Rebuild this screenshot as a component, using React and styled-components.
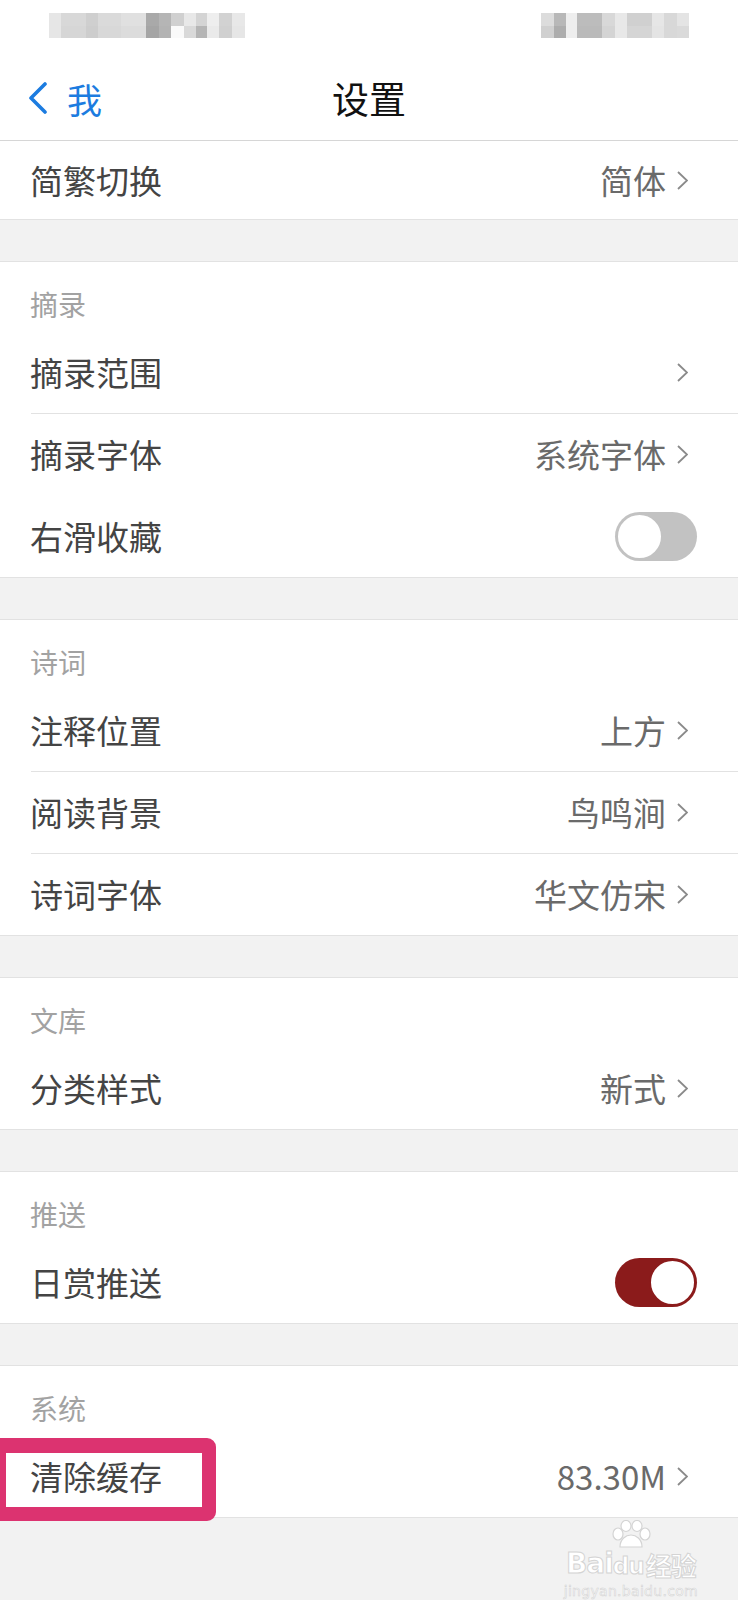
import styled, { createGlobalStyle } from "styled-components";

const GlobalStyle = createGlobalStyle`
  body {
    margin: 0;
    background: #f2f2f2;
    font-family: "Noto Sans CJK SC", "Noto Sans", sans-serif;
  }
`;

// blurred status bar blocks: [width, top shade, bottom shade]
const leftCells = [
  [12, '#e6e6e6', '#e6e6e6'], [25, '#d8d8d8', '#d6d6d6'], [12, '#cfcfcf', '#cdcdcd'],
  [23, '#dadada', '#d8d8d8'], [25, '#e0e0e0', '#dcdcdc'], [13, '#a9a9a9', '#a5a5a5'],
  [12, '#b5b5b5', '#b3b3b3'], [13, '#d0d0d0', '#fafafa'], [12, '#e8e8e8', '#d9d9d9'],
  [11, '#d4d4d4', '#b5b5b5'], [12, '#eeeeee', '#eaeaea'], [13, '#d2d2d2', '#d0d0d0'],
  [13, '#e8e8e8', '#e6e6e6']
];
const rightCells = [
  [13, '#dcdcdc', '#d0d0d0'], [12, '#b8b8b8', '#adadad'], [11, '#eeeeee', '#eeeeee'],
  [25, '#bcbcbc', '#bababa'], [13, '#d8d8d8', '#d4d4d4'], [12, '#e8e8e8', '#e8e8e8'],
  [25, '#d0d0d0', '#d5d5d5'], [12, '#e6e6e6', '#e4e4e4'], [13, '#d8d8d8', '#d8d8d8'],
  [12, '#e4e4e4', '#dadada']
];

const Page = styled.div`
  position: relative;
  min-height: 1600px;
  background: #f2f2f2;
  overflow: hidden;
`;

const Header = styled.header`
  background: #fff;
  border-bottom: 1px solid #d6d6d6;
`;

const StatusBar = styled.div`
  height: 56px;
  box-sizing: border-box;
  padding: 13px 49px 0 49px;
  display: flex;
  justify-content: space-between;
  align-items: flex-start;
`;

const Mosaic = styled.div`
  display: flex;
  filter: blur(0.6px);
`;

const MosaicCell = styled.div`
  width: ${p => p.$w}px;
  display: flex;
  flex-direction: column;
  & > span { display: block; height: 12.5px; }
`;

const NavBar = styled.nav`
  height: 84px;
  display: grid;
  grid-template-columns: 1fr auto 1fr;
  align-items: center;
`;

const BackLink = styled.div`
  display: flex;
  align-items: center;
  gap: 19px;
  padding-left: 28px;
  color: #1c7ce0;
  font-size: 35px;
  line-height: 1;
`;

const Title = styled.h1`
  margin: 0;
  font-size: 37px;
  font-weight: 400;
  color: #111;
  line-height: 1;
`;

const Section = styled.section`
  background: #fff;
  border-top: ${p => (p.$flush ? 'none' : '1px solid #e2e2e2')};
  border-bottom: 1px solid #e2e2e2;
  margin-top: ${p => (p.$flush ? 0 : 41)}px;
`;

const SectionLabel = styled.div`
  height: 69px;
  box-sizing: border-box;
  padding: 28px 0 0 30px;
  font-size: 28px;
  line-height: 28px;
  color: #a2a2a2;
`;

const Row = styled.div`
  position: relative;
  height: ${p => p.$h || 82}px;
  box-sizing: border-box;
  display: flex;
  align-items: center;
  padding: 0 ${p => (p.$toggle ? 41 : 50)}px 0 30px;
  & + &::before {
    content: '';
    position: absolute;
    top: 0;
    left: 31px;
    right: 0;
    height: 1px;
    background: #e2e2e2;
  }
`;

const Label = styled.span`
  flex: 1;
  font-size: 33px;
  color: #444;
  line-height: 1;
`;

const Value = styled.span`
  font-size: 33px;
  color: #6a6a6a;
  line-height: 1;
  margin-right: 11px;
`;

const Toggle = styled.div`
  position: relative;
  width: 82px;
  height: 49px;
  border-radius: 25px;
  background: ${p => (p.$on ? '#8b1b1b' : '#c2c2c2')};
  &::after {
    content: '';
    position: absolute;
    top: 1px;
    ${p => (p.$on ? 'right: 1px;' : 'left: 1px;')}
    width: 43px;
    height: 43px;
    border-radius: 50%;
    background: #fff;
    border: 2px solid ${p => (p.$on ? '#8b1b1b' : '#c2c2c2')};
    box-sizing: content-box;
  }
`;

const Highlight = styled.div`
  position: absolute;
  left: 0;
  top: 3px;
  width: 216px;
  height: 83px;
  box-sizing: border-box;
  border: solid #dc3370;
  border-width: 15px 14px 14px 6px;
  border-radius: 0 9px 9px 0;
  pointer-events: none;
`;

const Watermark = styled.div`
  position: absolute;
  right: 40px;
  top: 1520px;
  display: flex;
  flex-direction: column;
  align-items: center;
  color: #fff;
  font-family: "DejaVu Sans", sans-serif;
`;

const MarkTop = styled.div`
  display: flex;
  align-items: flex-end;
  font-weight: bold;
  font-size: 28px;
  line-height: 1;
  -webkit-text-stroke: 1px #d4d4d4;
  letter-spacing: -1px;
`;

const MarkCn = styled.span`
  font-family: "Noto Sans CJK SC", sans-serif;
  font-size: 26px;
  font-weight: 700;
  margin-left: 2px;
`;

const MarkUrl = styled.div`
  margin-top: 6px;
  font-size: 14px;
  line-height: 1;
  -webkit-text-stroke: 0.6px #d4d4d4;
  letter-spacing: 0.3px;
`;

const Chevron = () => (
  <svg width="11" height="19" viewBox="0 0 11 19">
    <polyline points="1,1 10,9.5 1,18" fill="none" stroke="#8a8a8a" strokeWidth="1.8" />
  </svg>
);

const BackIcon = () => (
  <svg width="20" height="32" viewBox="0 0 20 32">
    <polyline points="17,2 3,16 17,30" fill="none" stroke="#1c7ce0" strokeWidth="3.6" strokeLinecap="round" strokeLinejoin="round" />
  </svg>
);

const Paw = () => (
  <svg width="42" height="30" viewBox="0 0 42 30">
    <g fill="#fff" stroke="#d4d4d4" strokeWidth="1.2">
      <ellipse cx="8" cy="14" rx="5" ry="6" />
      <ellipse cx="16" cy="6" rx="5" ry="5.5" />
      <ellipse cx="27" cy="6" rx="5" ry="5.5" />
      <ellipse cx="35" cy="14" rx="5" ry="6" />
      <path d="M10 27 C10 19 16 15 21 15 C26 15 32 19 32 27 Z" />
    </g>
  </svg>
);

const Cells = ({ cells }) => (
  <Mosaic>
    {cells.map(([w, a, b], i) => (
      <MosaicCell key={i} $w={w}>
        <span style={{ background: a }} />
        <span style={{ background: b }} />
      </MosaicCell>
    ))}
  </Mosaic>
);

const sections = [
  {
    title: '摘录',
    rows: [
      { label: '摘录范围', value: '' },
      { label: '摘录字体', value: '系统字体' },
      { label: '右滑收藏', toggle: 'off' }
    ]
  },
  {
    title: '诗词',
    rows: [
      { label: '注释位置', value: '上方' },
      { label: '阅读背景', value: '鸟鸣涧' },
      { label: '诗词字体', value: '华文仿宋' }
    ]
  },
  { title: '文库', rows: [{ label: '分类样式', value: '新式' }] },
  { title: '推送', rows: [{ label: '日赏推送', toggle: 'on' }] },
  { title: '系统', rows: [{ label: '清除缓存', value: '83.30M', mark: true }] }
];

const SettingRow = ({ label, value, toggle, mark, h }) => (
  <Row $toggle={!!toggle} $h={h}>
    <Label>{label}</Label>
    {toggle ? (
      <Toggle $on={toggle === 'on'} />
    ) : (
      <>
        {value && <Value>{value}</Value>}
        <Chevron />
      </>
    )}
    {mark && <Highlight />}
  </Row>
);

const App = () => {
  return (
    <Page>
      <GlobalStyle />
      <Header>
        <StatusBar>
          <Cells cells={leftCells} />
          <Cells cells={rightCells} />
        </StatusBar>
        <NavBar>
          <BackLink>
            <BackIcon />
            <span>我</span>
          </BackLink>
          <Title>设置</Title>
          <div />
        </NavBar>
      </Header>

      <Section $flush>
        <SettingRow label="简繁切换" value="简体" h={78} />
      </Section>

      {sections.map(s => (
        <Section key={s.title}>
          <SectionLabel>{s.title}</SectionLabel>
          {s.rows.map(r => (
            <SettingRow key={r.label} {...r} />
          ))}
        </Section>
      ))}

      <Watermark>
        <Paw />
        <MarkTop>
          <span>Bai</span>
          <span style={{ fontSize: 23 }}>du</span>
          <MarkCn>经验</MarkCn>
        </MarkTop>
        <MarkUrl>jingyan.baidu.com</MarkUrl>
      </Watermark>
    </Page>
  );
};

export default App;
